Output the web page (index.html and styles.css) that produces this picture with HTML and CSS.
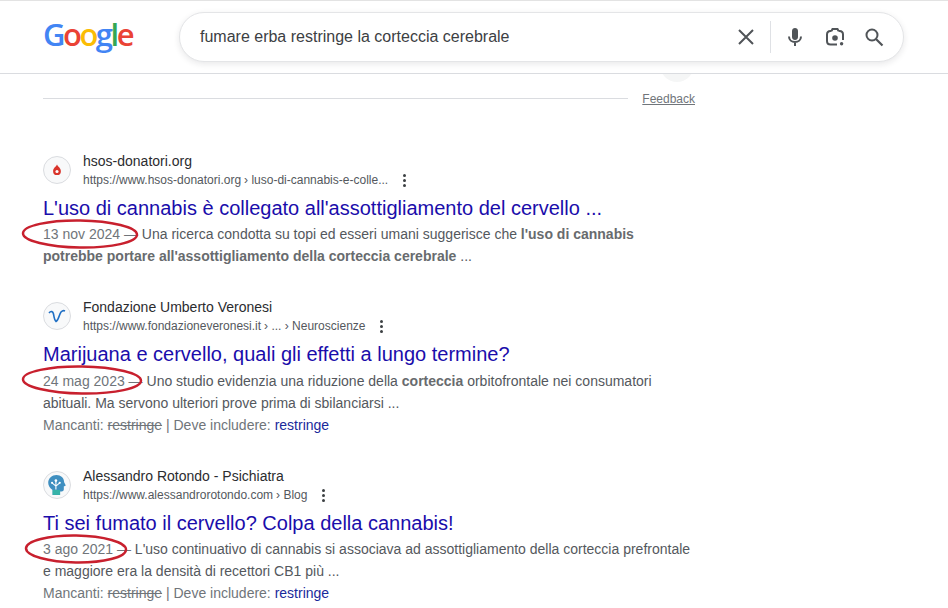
FILE: index.html
```html
<!DOCTYPE html>
<html lang="it">
<head>
    <meta charset="UTF-8">
    <title>fumare erba restringe la corteccia cerebrale</title>
    <link rel="stylesheet" href="styles.css">
</head>
<body>
    <header class="top-bar">
        <div class="logo"><span class="blue">G</span><span class="red">o</span><span class="yellow">o</span><span class="blue">g</span><span class="green">l</span><span class="red">e</span></div>
        <div class="search-box">
            <div class="query">fumare erba restringe la corteccia cerebrale</div>
            <svg class="clear-icon" width="24" height="24" viewBox="0 0 24 24"><path d="M5 5l14 14M19 5L5 19" stroke="#505458" stroke-width="2" fill="none"/></svg>
            <div class="divider"></div>
            <svg class="mic-icon" width="24" height="24" viewBox="0 0 24 24"><path fill="#505458" d="M12 15c1.700 0 3-1.300 3-3V6c0-1.700-1.300-3-3-3S9 4.300 9 6v6c0 1.700 1.300 3 3 3z"/><path fill="none" stroke="#505458" stroke-width="2" d="M6 11.500c0 3.300 2.700 5.500 6 5.500s6-2.200 6-5.500M12 17v4"/></svg>
            <svg class="lens-icon" width="24" height="24" viewBox="0 0 24 24"><circle cx="12" cy="13" r="2.800" fill="#505458"/><circle cx="18.600" cy="18.800" r="1.700" fill="#505458"/><path fill="none" stroke="#505458" stroke-width="2" d="M8.500 6H7.500C5.500 6 4 7.500 4 9.500v6.500C4 18 5.500 19.500 7.500 19.500H14M15.500 6h1c2 0 3.500 1.500 3.500 3.500V15M8.500 6l1-2h5l1 2"/></svg>
            <svg class="search-icon" width="24" height="24" viewBox="0 0 24 24"><circle cx="10" cy="10" r="5.500" fill="none" stroke="#505458" stroke-width="2"/><path d="M14 14l6.500 6.500" stroke="#505458" stroke-width="2.200" fill="none"/></svg>
        </div>
    </header>

    <main class="results">
        <div class="round-bump"></div>
        <div class="feedback-row">
            <div class="rule"></div>
            <a class="feedback">Feedback</a>
        </div>

        <article class="result first">
            <svg class="date-ring" width="120" height="32" viewBox="0 0 120 32"><ellipse cx="59" cy="16" rx="57" ry="13.500" transform="rotate(0.800 59 16)" fill="none" stroke="#c8202e" stroke-width="2.500"/></svg>
            <div class="site">
                <div class="favicon">
                    <svg width="14" height="14" viewBox="0 0 18 18"><path fill="#d9342b" d="M9 2c1 2.500 5 4.500 5 8.500a5 5 0 0 1-10 0C4 6.500 8 4.500 9 2z"/><circle cx="9" cy="11" r="2" fill="#fff"/></svg>
                </div>
                <div class="site-text">
                    <div class="site-name">hsos-donatori.org</div>
                    <div class="site-url">https://www.hsos-donatori.org <span class="crumb">› luso-di-cannabis-e-colle...</span><span class="dots"><i></i><i></i><i></i></span></div>
                </div>
            </div>
            <h3 class="title">L'uso di cannabis è collegato all'assottigliamento del cervello ...</h3>
            <p class="snippet"><span class="date">13 nov 2024 — </span>Una ricerca condotta su topi ed esseri umani suggerisce che <b>l'uso di cannabis potrebbe portare all'assottigliamento della corteccia cerebrale</b> ...</p>
        </article>

        <article class="result second">
            <svg class="date-ring" width="124" height="32" viewBox="0 0 124 32"><ellipse cx="61" cy="16" rx="59" ry="13.500" transform="rotate(0.800 61 16)" fill="none" stroke="#c8202e" stroke-width="2.500"/></svg>
            <div class="site">
                <div class="favicon">
                    <svg width="22" height="22" viewBox="0 0 22 22"><path fill="none" stroke="#1f6fc4" stroke-width="1.600" d="M3 8c2-2.500 4-1.500 4.500 1 .5 3 .8 6 2.500 7.500 3-1.500 3-7 5-9.500 1.500-1.500 3-1.500 4-1"/></svg>
                </div>
                <div class="site-text">
                    <div class="site-name">Fondazione Umberto Veronesi</div>
                    <div class="site-url">https://www.fondazioneveronesi.it <span class="crumb">› ... › Neuroscienze</span><span class="dots"><i></i><i></i><i></i></span></div>
                </div>
            </div>
            <h3 class="title">Marijuana e cervello, quali gli effetti a lungo termine?</h3>
            <p class="snippet"><span class="date">24 mag 2023 — </span>Uno studio evidenzia una riduzione della <b>corteccia</b> orbitofrontale nei consumatori abituali. Ma servono ulteriori prove prima di sbilanciarsi ...</p>
            <p class="missing">Mancanti: <s>restringe</s> | Deve includere: <a>restringe</a></p>
        </article>

        <article class="result">
            <svg class="date-ring" width="108" height="32" viewBox="0 0 108 32"><ellipse cx="55" cy="16" rx="50" ry="13.500" transform="rotate(0.800 55 16)" fill="none" stroke="#c8202e" stroke-width="2.500"/></svg>
            <div class="site">
                <div class="favicon">
                    <svg width="22" height="22" viewBox="0 0 20 20"><path fill="#3f8fc0" d="M9.500 1c4 0 7 2.800 7 6.500l1.500 3-1.800.8V14c0 1-1 1.800-2 1.800h-1.400V19H6v-4.500C3.500 13 2 10.500 2 8c0-4 3.500-7 7.500-7z"/><path fill="#36b3a8" d="M6 14.500h6.800V19H6z"/><circle cx="9" cy="6" r="1.200" fill="#fff"/><circle cx="5.500" cy="8" r="1" fill="#fff"/><circle cx="12.500" cy="8" r="1" fill="#fff"/><path stroke="#fff" fill="none" d="M9 6v8M5.500 8L9 11M12.500 8L9 11"/></svg>
                </div>
                <div class="site-text">
                    <div class="site-name">Alessandro Rotondo - Psichiatra</div>
                    <div class="site-url">https://www.alessandrorotondo.com <span class="crumb">› Blog</span><span class="dots"><i></i><i></i><i></i></span></div>
                </div>
            </div>
            <h3 class="title">Ti sei fumato il cervello? Colpa della cannabis!</h3>
            <p class="snippet"><span class="date">3 ago 2021 — </span>L'uso continuativo di cannabis si associava ad assottigliamento della corteccia prefrontale e maggiore era la densità di recettori CB1 più ...</p>
            <p class="missing">Mancanti: <s>restringe</s> | Deve includere: <a>restringe</a></p>
        </article>
    </main>
</body>
</html>
```

FILE: styles.css
```css
html, body {
    height: 100%;
    overflow: hidden;
}
body {
    font-family: 'Liberation Sans', Arial, sans-serif;
    margin: 0;
    padding: 0;
    background-color: #FFFFFF;
    color: #54585d;
}
.top-bar {
    display: flex;
    align-items: center;
    height: 72px;
    border-top: 1px solid #e3e3e3;
    border-bottom: 1px solid #dadce0;
    position: relative;
    z-index: 2;
    background-color: #fff;
}
.logo {
    width: 136px;
    margin-left: 43px;
    margin-top: -7px;
    font-family: 'Open Sans', sans-serif;
    font-size: 31px;
    font-weight: 600;
    line-height: 40px;
    letter-spacing: -2.5px;
}
.blue { color: #4285f4; }
.red { color: #ea4335; }
.yellow { color: #fbbc05; }
.green { color: #34a853; }
.search-box {
    display: flex;
    align-items: center;
    width: 725px;
    height: 50px;
    box-sizing: border-box;
    padding: 0 17px 0 20px;
    background-color: #fff;
    border: 1px solid #e4e5e7;
    border-radius: 25px;
    box-shadow: 0 2px 6px rgba(32, 33, 36, 0.1);
}
.query {
    flex-grow: 1;
    font-size: 16px;
    color: #3c4043;
}
.clear-icon {
    margin-right: 12px;
}
.divider {
    width: 1px;
    height: 32px;
    background-color: #dfe1e5;
    margin-right: 12px;
}
.mic-icon {
    margin-right: 16px;
}
.lens-icon {
    margin-right: 15px;
}
.results {
    width: 652px;
    margin-left: 43px;
    padding-top: 17px;
    position: relative;
}
.round-bump {
    position: absolute;
    left: 617px;
    top: -26px;
    width: 34px;
    height: 34px;
    border-radius: 50%;
    background-color: #f5f6f6;
}
.feedback-row {
    display: flex;
    align-items: center;
    gap: 14px;
    height: 16px;
    position: relative;
}
.rule {
    flex-grow: 1;
    height: 1px;
    margin-bottom: 2px;
    background-color: #dadce0;
}
.feedback {
    font-size: 12px;
    color: #70757a;
    text-decoration: underline;
}
.result {
    position: relative;
    margin-top: 31px;
}
.result.first {
    margin-top: 45px;
}
.date-ring {
    position: absolute;
    left: -22px;
    top: 66px;
    z-index: 1;
}
.site {
    display: flex;
    align-items: center;
    gap: 12px;
    height: 36px;
}
.favicon {
    display: flex;
    align-items: center;
    justify-content: center;
    width: 28px;
    height: 28px;
    border: 1px solid #dadce0;
    border-radius: 50%;
    background-color: #f8f9fa;
    box-sizing: border-box;
}
.site-name {
    font-size: 14px;
    line-height: 20px;
    color: #2b2c2f;
}
.site-url {
    font-size: 12px;
    line-height: 18px;
    color: #54585d;
    display: flex;
    align-items: center;
    gap: 3px;
}
.dots {
    display: inline-flex;
    flex-direction: column;
    gap: 2px;
    margin-left: 12px;
}
.dots i {
    width: 3px;
    height: 3px;
    border-radius: 50%;
    background-color: #3c4043;
}
.title {
    margin: 7px 0 0;
    font-size: 20px;
    line-height: 26px;
    font-weight: 400;
    color: #1a0dab;
}
.snippet {
    margin: 2px 0 0;
    font-size: 14px;
    line-height: 22px;
    color: #54585d;
}
.second .snippet {
    margin-top: 3px;
}
.snippet b {
    color: #686b6e;
}
.date {
    color: #70757a;
}
.missing {
    margin: 0;
    font-size: 14px;
    line-height: 22px;
    color: #70757a;
}
.missing a {
    color: #1a2a9b;
}
```
